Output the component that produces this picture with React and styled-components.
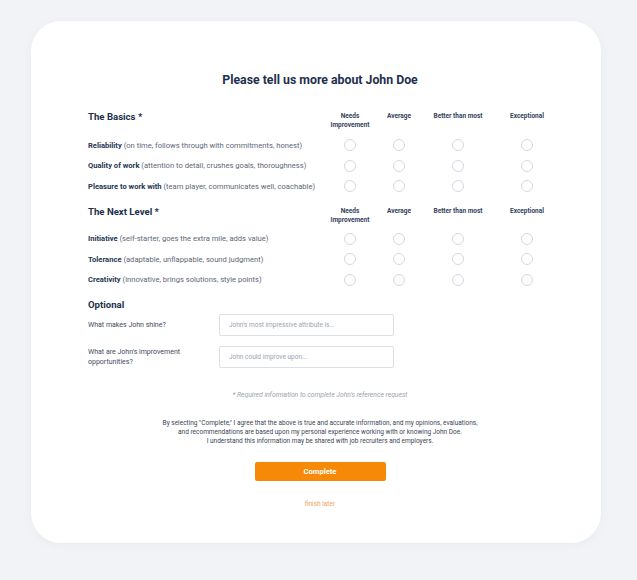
import * as React from "react";
import styled, { createGlobalStyle } from "styled-components";

const GlobalStyle = createGlobalStyle`
  html, body {
    margin: 0;
    padding: 0;
    background: #f1f3f6;
    font-family: Roboto, "Liberation Sans", sans-serif;
  }
`;

const Page = styled.div`
  width: 637px;
  height: 580px;
  padding: 21px 0 0 31px;
  box-sizing: border-box;
`;

const Card = styled.div`
  width: 570px;
  height: 522px;
  box-sizing: border-box;
  background: #ffffff;
  border-radius: 30px;
  box-shadow: 0 2px 10px rgba(30, 50, 80, 0.04);
  padding: 51px 40px 0 48px;
  display: flex;
  flex-direction: column;
`;

const Title = styled.h1`
  margin: 0;
  font-size: 12.3px;
  line-height: 16px;
  font-weight: 700;
  color: #1e2f4d;
  text-align: center;
`;

const Section = styled.div`
  padding-left: 9px;
  margin-top: ${(p) => p.$top}px;
`;

const Grid = styled.div`
  display: grid;
  grid-template-columns: 1fr 50px 48px 70px 68px;
  align-items: ${(p) => (p.$head ? "start" : "center")};
  height: ${(p) => (p.$head ? "auto" : "20.5px")};
  margin-bottom: ${(p) => (p.$head ? p.$gap : 0)}px;
`;

const Heading = styled.h2`
  margin: 0;
  font-size: 9.6px;
  line-height: 14px;
  font-weight: 700;
  color: #1e2f4d;
`;

const ColHead = styled.div`
  padding-top: 2px;
  font-size: 6.5px;
  line-height: 9px;
  font-weight: 700;
  color: #34435e;
  text-align: center;
`;

const Label = styled.div`
  font-size: 7.6px;
  color: #5e6778;
  white-space: nowrap;

  b {
    color: #263653;
    font-weight: 700;
  }
`;

const Cell = styled.div`
  display: flex;
  justify-content: center;
`;

const Radio = styled.input.attrs({ type: "radio" })`
  appearance: none;
  margin: 0;
  width: 12px;
  height: 12px;
  border-radius: 50%;
  border: 1px solid #d4d9e0;
  background: #fff;
  box-sizing: border-box;
`;

const OptGrid = styled.div`
  display: grid;
  grid-template-columns: 131px 175px;
  row-gap: 10px;
  align-items: center;
  margin-top: 2px;
`;

const OptLabel = styled.label`
  font-size: 7px;
  line-height: 10px;
  color: #3f4a5e;
  padding-right: 26px;
`;

const TextInput = styled.input`
  height: 22px;
  box-sizing: border-box;
  border: 1px solid #dde1e7;
  border-radius: 2px;
  padding: 0 9px;
  font-family: inherit;
  font-size: 6.5px;
  color: #3f4a5e;
  outline: none;

  &::placeholder {
    color: #9ca4b2;
  }
`;

const Note = styled.p`
  margin: 23px 0 0;
  font-size: 6.75px;
  line-height: 9px;
  font-style: italic;
  color: #9aa2b0;
  text-align: center;
`;

const Agreement = styled.p`
  margin: 19px 0 0;
  font-size: 6.5px;
  line-height: 9px;
  color: #3b4557;
  text-align: center;
`;

const Button = styled.button`
  align-self: center;
  margin-top: 16px;
  width: 131px;
  height: 19px;
  border: none;
  border-radius: 2px;
  background: #f68a08;
  color: #fff;
  font-family: inherit;
  font-size: 7.6px;
  font-weight: 700;
  cursor: pointer;
`;

const Later = styled.a`
  align-self: center;
  margin-top: 19px;
  font-size: 6.5px;
  line-height: 9px;
  color: #f0a25c;
  text-decoration: none;
`;

const columns = ["Needs Improvement", "Average", "Better than most", "Exceptional"];

const basics = [
  ["Reliability", "(on time, follows through with commitments, honest)"],
  ["Quality of work", "(attention to detail, crushes goals, thoroughness)"],
  ["Pleasure to work with", "(team player, communicates well, coachable)"],
];

const nextLevel = [
  ["Initiative", "(self-starter, goes the extra mile, adds value)"],
  ["Tolerance", "(adaptable, unflappable, sound judgment)"],
  ["Creativity", "(innovative, brings solutions, style points)"],
];

function RatingSection({ title, rows, top, gap, name }) {
  return (
    <Section $top={top}>
      <Grid $head $gap={gap}>
        <Heading>{title}</Heading>
        {columns.map((c) => (
          <ColHead key={c}>
            {c === "Needs Improvement" ? (
              <>
                Needs
                <br />
                Improvement
              </>
            ) : (
              c
            )}
          </ColHead>
        ))}
      </Grid>
      {rows.map(([bold, rest], i) => (
        <Grid key={bold}>
          <Label>
            <b>{bold}</b> {rest}
          </Label>
          {columns.map((c) => (
            <Cell key={c}>
              <Radio name={`${name}-${i}`} />
            </Cell>
          ))}
        </Grid>
      ))}
    </Section>
  );
}

function App() {
  return (
    <Page>
      <GlobalStyle />
      <Card>
        <Title>Please tell us more about John Doe</Title>
        <RatingSection title="The Basics *" rows={basics} top={22} gap={5} name="basic" />
        <RatingSection title="The Next Level *" rows={nextLevel} top={8} gap={4} name="next" />
        <Section $top={8}>
          <Heading>Optional</Heading>
          <OptGrid>
            <OptLabel>What makes John shine?</OptLabel>
            <TextInput placeholder="John's most impressive attribute is..." />
            <OptLabel>What are John's improvement opportunities?</OptLabel>
            <TextInput placeholder="John could improve upon..." />
          </OptGrid>
        </Section>
        <Note>* Required information to complete John's reference request</Note>
        <Agreement>
          By selecting "Complete," I agree that the above is true and accurate information, and my opinions, evaluations,
          <br />
          and recommendations are based upon my personal experience working with or knowing John Doe.
          <br />
          I understand this information may be shared with job recruiters and employers.
        </Agreement>
        <Button>Complete</Button>
        <Later href="#">finish later</Later>
      </Card>
    </Page>
  );
}

export default App;
